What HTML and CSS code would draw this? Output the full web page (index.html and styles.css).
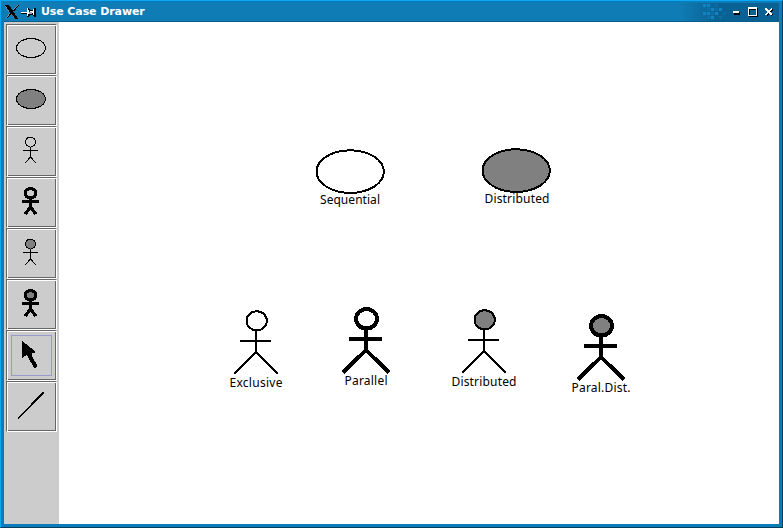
FILE: index.html
```html
<!DOCTYPE html>
<html lang="en">
<head>
<meta charset="utf-8">
<title>Use Case Drawer</title>
<link rel="stylesheet" href="styles.css">
</head>
<body>
<div class="window">
  <header class="titlebar">
    <svg class="app-icons" width="37" height="19" viewBox="4 3 37 19" shape-rendering="crispEdges">
      <path d="M18 5L13 10.500M10.500 13L5.500 18.500" stroke="#78909c"/>
      <path d="M19 5L13.500 11M11 13.500L6.500 18.500" stroke="#000"/>
      <path d="M5 5h4l9.500 14h-4z" fill="#000"/>
      <path d="M5.500 5.500l4 6M14.500 18.500l-3-4.500" stroke="#78909c" stroke-width=".8"/>
      <path d="M21 13h7v1h-7z" fill="#000"/><path d="M21 12h7v1h-7z" fill="#fff"/>
      <path d="M27 8h2v1h1v1h3V9h1V8h2v9h-2v-1h-1v-1h-3v1h-1v1h-2z" fill="#000"/>
      <path d="M27 8h1v8h-1zM28 10h1v4h-1zM30 11h3v2h-3zM33 9h1v6h-1z" fill="#fff"/>
      <path d="M29 12h3v2h-3z" fill="#aaa"/>
    </svg>
    <h1 class="title">Use Case Drawer</h1>
    <svg class="controls" width="79" height="19" viewBox="700 3 79 19" shape-rendering="crispEdges">
      <g fill="#1284c4">
        <path d="M703 4h3v3h-3zM707 4h3v3h-3zM711 8h3v3h-3zM719 8h3v3h-3zM703 12h3v3h-3zM707 12h3v3h-3zM715 12h3v3h-3zM711 16h3v3h-3z"/>
        <path opacity=".35" d="M707 8h3v3h-3zM715 8h3v3h-3zM711 12h3v3h-3zM723 12h3v3h-3zM707 16h3v3h-3zM719 16h3v3h-3zM715 4h3v3h-3z"/>
      </g>
      <path d="M734 12h6v3h-6z" fill="#000"/><path d="M733 11h6v2h-6z" fill="#fff"/>
      <path d="M749 8h9v9h-9zM750 10v6h7v-6z" fill="#000" fill-rule="evenodd"/>
      <path d="M748 7h9v9h-9zM749 9v6h7V9z" fill="#fff" fill-rule="evenodd"/>
      <path d="M766.500 9.500l6 6M772.500 9.500l-6 6" stroke="#000" stroke-width="1.800"/>
      <path d="M765.500 8.500l6.500 6.500M772 8.500l-6.500 6.500" stroke="#fff" stroke-width="1.600"/>
    </svg>
  </header>
  <main class="content">
    <nav class="toolbar">
      <button class="tool" aria-label="Sequential use case"><svg viewBox="0 0 51 51"><ellipse cx="25" cy="24" rx="14.5" ry="9.5"/></svg></button>
      <button class="tool" aria-label="Distributed use case"><svg viewBox="0 0 51 51"><ellipse class="filled" cx="25" cy="24" rx="14.5" ry="9.5"/></svg></button>
      <button class="tool" aria-label="Exclusive actor"><svg viewBox="0 0 51 51"><ellipse cx="24.5" cy="16" rx="5" ry="5"/><path d="M24.5 21v10M17 24.5h15M24.5 31l-5.5 6M24.5 31l5.5 6"/></svg></button>
      <button class="tool" aria-label="Parallel actor"><svg class="bold" viewBox="0 0 51 51"><ellipse cx="24.5" cy="16.3" rx="5.2" ry="4.8"/><path d="M24.5 21v10M16 24.5h17M24.5 30.500l-5.500 6.500M24.500 30.500l5.500 6.500"/></svg></button>
      <button class="tool" aria-label="Distributed actor"><svg viewBox="0 0 51 51"><ellipse class="filled" cx="24.5" cy="16" rx="5" ry="5"/><path d="M24.5 21v10M17 24.5h15M24.5 31l-5.5 6M24.5 31l5.5 6"/></svg></button>
      <button class="tool" aria-label="Parallel distributed actor"><svg class="bold" viewBox="0 0 51 51"><ellipse class="filled" cx="24.5" cy="16.3" rx="5.2" ry="4.8"/><path d="M24.5 21v10M16 24.5h17M24.5 30.500l-5.500 6.500M24.500 30.500l5.500 6.500"/></svg></button>
      <button class="tool" aria-label="Select"><svg viewBox="0 0 51 51"><rect class="focus" x="5.5" y="5.5" width="40" height="40"/><path class="pointer" d="M16 11L29 21V23H26V26L31 35V37L28 38L21 25L16 28Z"/></svg></button>
      <button class="tool" aria-label="Line"><svg viewBox="0 0 51 51"><path class="line" d="M12 37.5L37.5 11.5"/></svg></button>
    </nav>
    <svg class="canvas" width="720" height="502" viewBox="59 22 720 502">
      <g class="thin">
        <ellipse cx="350.2" cy="171.6" rx="33.7" ry="21.3"/>
        <ellipse class="filled" cx="516.2" cy="170.6" rx="33.7" ry="21.3"/>
        <ellipse cx="256.7" cy="320.8" rx="10.2" ry="9.6"/>
        <path d="M256 331v21M240 341h31M256 352l-22 22M256 352l22 22"/>
        <ellipse class="filled" cx="484.7" cy="319.8" rx="10.2" ry="9.6"/>
        <path d="M484 330v21M468 340h31M484 351l-22 22M484 351l22 22"/>
      </g>
      <g class="thick">
        <ellipse cx="366.5" cy="318.8" rx="10.5" ry="9.7"/>
        <path d="M366 329v22M349 339h33M366 350l-23 22.500M366 350l23 22.500"/>
        <ellipse class="filled" cx="601.5" cy="325.8" rx="10.5" ry="9.7"/>
        <path d="M601 336v22M584 346h33M601 357l-23 22.500M601 357l23 22.500"/>
      </g>
      <g class="labels">
        <text x="320" y="204" textLength="60">Sequential</text>
        <text x="484.500" y="203" textLength="65">Distributed</text>
        <text x="229.500" y="387" textLength="53">Exclusive</text>
        <text x="344.500" y="385" textLength="43">Parallel</text>
        <text x="451.500" y="386" textLength="65">Distributed</text>
        <text x="571.500" y="392" textLength="59">Paral.Dist.</text>
      </g>
    </svg>
  </main>
</div>
</body>
</html>
```
FILE: styles.css
```css
* { box-sizing: border-box; }
body { margin: 0; overflow: hidden; }
.window {
  width: 783px;
  height: 528px;
  display: flex;
  flex-direction: column;
  background: #0b7cb8;
  border: 1px solid #0ba8f8;
  border-right-color: #003d60;
  border-bottom-color: #003d60;
  padding: 2px 3px 3px;
}
.titlebar {
  height: 19px;
  display: flex;
  align-items: center;
  background: linear-gradient(90deg, #107cb6 0 87%, #0a6294 92%);
  border-bottom: 1px solid #075d8c;
}
.app-icons, .controls { flex: none; display: block; }
.title {
  flex: 1;
  margin: 0;
  font: bold 11px/18px "DejaVu Sans", sans-serif;
  letter-spacing: -.1px;
  color: #fff;
  white-space: nowrap;
}
.content { height: 502px; display: flex; }
.toolbar {
  width: 55px;
  padding: 2px;
  background: #ccc;
  display: flex;
  flex-direction: column;
}
.tool {
  width: 51px;
  height: 51px;
  flex: none;
  padding: 0;
  border: solid;
  border-width: 1px;
  border-color: #666 #fff #fff #666;
  background: #ccc;
  box-shadow: inset 1px 1px #fff, inset -1px -1px #666;
}
.tool svg {
  display: block;
  width: 51px;
  height: 51px;
  margin: -1px;
  fill: none;
  stroke: #000;
  shape-rendering: crispEdges;
}
.tool .bold { stroke-width: 3.3; }
.tool .filled, .canvas .filled { fill: #808080; }
.tool .focus { stroke: #99c; }
.tool .pointer { fill: #000; stroke: none; }
.tool .line { stroke-width: 1.7; }
.canvas {
  display: block;
  flex: none;
  background: #fff;
  fill: none;
  stroke: #000;
  shape-rendering: crispEdges;
}
.thin { stroke-width: 2; }
.thick { stroke-width: 4; }
.labels {
  fill: #000;
  stroke: none;
  font: 12px "Noto Sans", sans-serif;
}
```
